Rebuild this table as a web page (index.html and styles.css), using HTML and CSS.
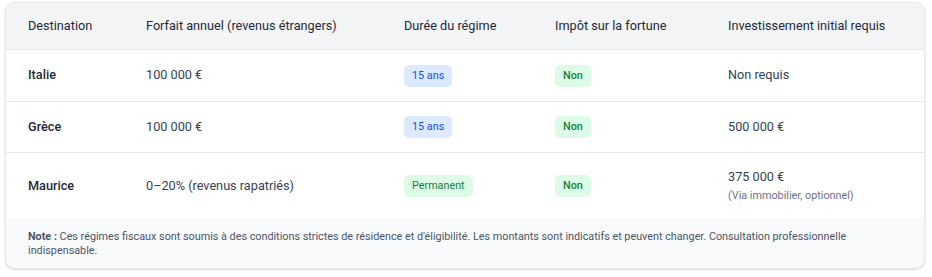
FILE: index.html
```html
<!DOCTYPE html>
<html lang="fr">
<head>
<meta charset="utf-8">
<title>Régimes fiscaux</title>
<link rel="stylesheet" href="styles.css">
</head>
<body>
<div class="page">
  <div class="card">
    <table class="tbl">
      <colgroup>
        <col class="c1"><col class="c2"><col class="c3"><col class="c4"><col class="c5">
      </colgroup>
      <thead>
        <tr>
          <th>Destination</th>
          <th>Forfait annuel (revenus étrangers)</th>
          <th>Durée du régime</th>
          <th>Impôt sur la fortune</th>
          <th>Investissement initial requis</th>
        </tr>
      </thead>
      <tbody>
        <tr>
          <td class="dest">Italie</td>
          <td>100 000 €</td>
          <td><span class="badge blue">15 ans</span></td>
          <td><span class="badge green strong">Non</span></td>
          <td>Non requis</td>
        </tr>
        <tr>
          <td class="dest">Grèce</td>
          <td>100 000 €</td>
          <td><span class="badge blue">15 ans</span></td>
          <td><span class="badge green strong">Non</span></td>
          <td>500 000 €</td>
        </tr>
        <tr class="tall">
          <td class="dest">Maurice</td>
          <td>0–20% (revenus rapatriés)</td>
          <td><span class="badge green">Permanent</span></td>
          <td><span class="badge green strong">Non</span></td>
          <td><div class="main">375 000 €</div><div class="sub">(Via immobilier, optionnel)</div></td>
        </tr>
      </tbody>
    </table>
    <div class="note"><strong>Note :</strong> Ces régimes fiscaux sont soumis à des conditions strictes de résidence et d'éligibilité. Les montants sont indicatifs et peuvent changer. Consultation professionnelle indispensable.</div>
  </div>
</div>
</body>
</html>
```
FILE: styles.css
```css
* { box-sizing: border-box; }
html, body { margin: 0; padding: 0; background: #ffffff; }
body { font-family: Roboto, "Noto Sans", Arial, sans-serif; color: #374151; }
.page { padding: 2px 7px 9px 5px; }
.card {
  width: 920px;
  border: 1px solid #e5e7eb;
  border-radius: 10px;
  overflow: hidden;
  background: #fff;
  box-shadow: 0 1px 3px rgba(0,0,0,0.10), 0 1px 2px rgba(0,0,0,0.06);
}
.tbl { width: 918px; border-collapse: collapse; table-layout: fixed; }
.c1 { width: 118px; } .c2 { width: 258px; } .c3 { width: 151px; } .c4 { width: 173px; } .c5 { width: 218px; }
.tbl th {
  background: #f3f4f6;
  text-align: left;
  font-weight: 400;
  font-size: 12.7px;
  line-height: 16px;
  color: #1f2937;
  padding: 15px 22px 15px;
  border-bottom: 1px solid #e5e7eb;
}
.tbl td {
  font-size: 12.7px;
  line-height: 18px;
  padding: 16px 22px 16px;
  color: #374151;
  vertical-align: middle;
  border-bottom: 1px solid #e5e7eb;
}
.tbl tbody tr:last-child td { border-bottom: none; padding-top: 15px; padding-bottom: 15px; }
.tbl td.dest { font-weight: 500; color: #1f2937; }
.main { line-height: 18px; }
.sub { font-size: 10.8px; line-height: 15px; color: #6b7280; margin-top: 2px; }
.badge {
  display: inline-block;
  vertical-align: middle;
  font-size: 10.8px;
  line-height: 14px;
  padding: 4px 8px;
  margin: -2px 0;
  border-radius: 5px;
  font-weight: 400;
}
.badge.blue { background: #dbeafe; color: #1d4ed8; }
.badge.green { background: #dcfce7; color: #15803d; }
.badge.strong { font-weight: 500; }
.note {
  background: #f9fafb;
  font-size: 10.8px;
  line-height: 14px;
  color: #4b5563;
  padding: 12px 22px 10px;
}
.note strong { font-weight: 700; }
```
